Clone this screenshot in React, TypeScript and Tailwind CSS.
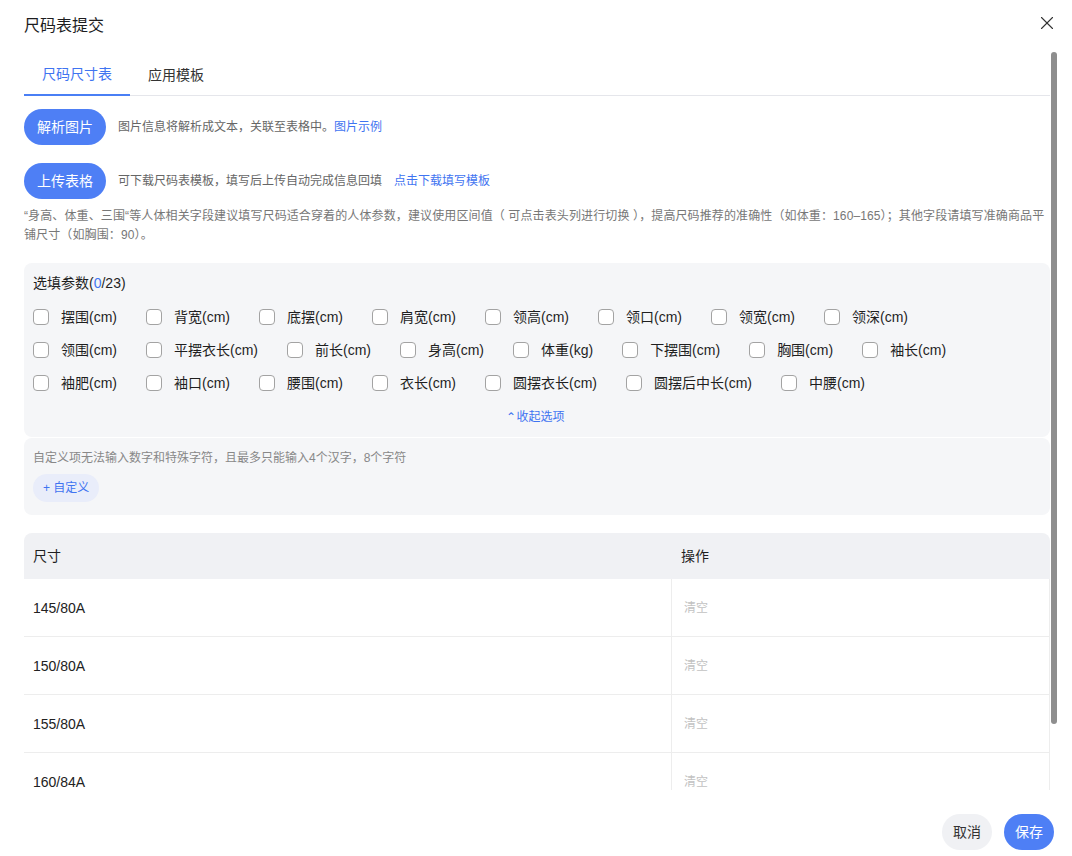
import { X } from "lucide-react";

const rows: string[][] = [
  ["摆围(cm)", "背宽(cm)", "底摆(cm)", "肩宽(cm)", "领高(cm)", "领口(cm)", "领宽(cm)", "领深(cm)"],
  ["领围(cm)", "平摆衣长(cm)", "前长(cm)", "身高(cm)", "体重(kg)", "下摆围(cm)", "胸围(cm)", "袖长(cm)"],
  ["袖肥(cm)", "袖口(cm)", "腰围(cm)", "衣长(cm)", "圆摆衣长(cm)", "圆摆后中长(cm)", "中腰(cm)"],
];

const sizes = ["145/80A", "150/80A", "155/80A", "160/84A"];

function Option({ label }: { label: string }) {
  return (
    <label className="flex items-center gap-3 text-sm leading-5 text-[#1f1f1f]">
      <span className="w-4 h-4 rounded-[4px] border border-[#a3a3a3] bg-white" />
      {label}
    </label>
  );
}

export default function App() {
  return (
    <div
      className="h-[856px] w-[1072px] flex flex-col bg-white overflow-hidden"
      style={{ fontFamily: '"Liberation Sans", "Noto Sans CJK SC", sans-serif' }}
    >
      <header className="h-[52px] flex items-start justify-between pl-6 pr-[14px] pt-4">
        <h1 className="text-base leading-5 text-[#1d1d1f]">尺码表提交</h1>
        <button className="-mt-1 text-[#333]">
          <X size={22} strokeWidth={1.2} />
        </button>
      </header>

      <div className="relative flex-1 overflow-hidden pl-6 pr-[22px]">
        <div className="absolute right-[15px] top-0 h-[672px] w-[6px] rounded-full bg-[#8e8e8e]" />

        <div className="flex h-[44px] border-b border-[#e5e6eb]">
          <div className="w-[106px] flex items-center justify-center pt-0.5 text-sm text-[#3f74f1] border-b-2 border-[#4a7ff5] -mb-px">
            尺码尺寸表
          </div>
          <div className="px-[18px] flex items-center pt-0.5 text-sm text-[#333]">应用模板</div>
        </div>

        <div className="mt-[13px] flex items-center gap-3">
          <button className="h-9 w-[82px] rounded-full bg-[#4e7ff5] text-white text-sm">解析图片</button>
          <span className="text-xs text-[#666]">
            图片信息将解析成文本，关联至表格中。<span className="text-[#3f74f1]">图片示例</span>
          </span>
        </div>

        <div className="mt-[18px] flex items-center gap-3">
          <button className="h-9 w-[82px] rounded-full bg-[#4e7ff5] text-white text-sm">上传表格</button>
          <span className="text-xs text-[#666]">可下载尺码表模板，填写后上传自动完成信息回填</span>
          <span className="text-xs text-[#3f74f1]">点击下载填写模板</span>
        </div>

        <p className="mt-2 text-xs leading-[19px] tracking-[0.12px] text-[#777]">
          “身高、体重、三围“等人体相关字段建议填写尺码适合穿着的人体参数，建议使用区间值（ 可点击表头列进行切换 ），提高尺码推荐的准确性（如体重：160–165）；其他字段请填写准确商品平铺尺寸（如胸围：90）。
        </p>

        <section className="mt-[18px] rounded-lg bg-[#f5f6f8] pl-[9px] pr-3 pt-[10px] pb-[10px]">
          <div className="text-sm leading-5 text-[#1f1f1f]">
            选填参数(<span className="text-[#3f74f1]">0</span>/23)
          </div>
          <div className="mt-[7px]">
            {rows.map((r, i) => (
              <div key={i} className="h-[33px] flex items-center gap-x-[29px]">
                {r.map((l) => (
                  <Option key={l} label={l} />
                ))}
              </div>
            ))}
          </div>
          <div className="mt-2 text-center text-xs leading-5 text-[#3f74f1]">⌃收起选项</div>
        </section>

        <section className="mt-px rounded-lg bg-[#f5f6f8] pl-[9px] pt-[11px] pb-[13px]">
          <div className="text-xs leading-[18px] text-[#888]">
            自定义项无法输入数字和特殊字符，且最多只能输入4个汉字，8个字符
          </div>
          <button className="mt-[7px] h-7 px-2.5 rounded-full bg-[#e9edfa] text-xs text-[#3f74f1]">+ 自定义</button>
        </section>

        <div className="mt-[18px]">
          <div className="h-[46px] flex items-center rounded-t-lg bg-[#f0f1f4] text-sm text-[#1f1f1f]">
            <div className="w-[647px] pl-[9px]">尺寸</div>
            <div className="pl-[10px]">操作</div>
          </div>
          {sizes.map((s) => (
            <div key={s} className="h-[58px] flex border-b border-r border-[#ededed]">
              <div className="w-[647px] pl-[9px] flex items-center text-sm text-[#222]">{s}</div>
              <div className="flex-1 border-l border-[#ededed] pl-[12px] flex items-center text-xs text-[#c2c2c2]">清空</div>
            </div>
          ))}
        </div>
      </div>

      <footer className="h-[66px] flex justify-end items-start gap-3 pr-[18px] pt-6">
        <button className="h-9 w-[50px] rounded-full bg-[#f0f1f4] text-sm text-[#333]">取消</button>
        <button className="h-9 w-[50px] rounded-full bg-[#4e7ff5] text-sm text-white">保存</button>
      </footer>
    </div>
  );
}
